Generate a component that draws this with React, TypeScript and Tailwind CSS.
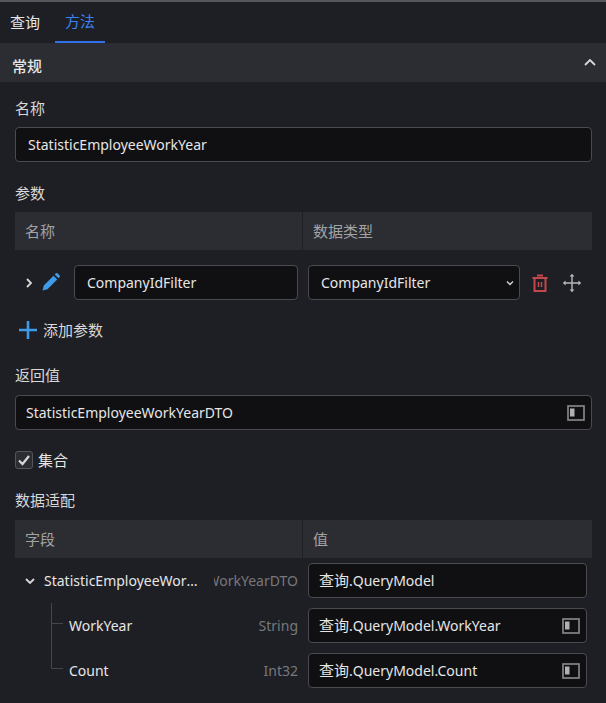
import type { ReactNode } from "react";

const fontStack = "font-['Noto_Sans','Noto_Sans_CJK_SC',sans-serif]";

function PanelIcon() {
  return (
    <svg width="18" height="16" viewBox="0 0 18 16" className="shrink-0">
      <rect x="1" y="1" width="16" height="14" fill="none" stroke="#858585" strokeWidth="1.7" />
      <rect x="3" y="3.5" width="4.5" height="8" fill="#b0b0b0" />
    </svg>
  );
}

function Chevron({ dir, className }: { dir: "up" | "down" | "right"; className?: string }) {
  const d = {
    up: "M2 9 L7 4 L12 9",
    down: "M3 5 L7 9 L11 5",
    right: "M5 3 L9 7 L5 11",
  }[dir];
  return (
    <svg width="14" height="14" viewBox="0 0 14 14" className={className}>
      <path d={d} fill="none" stroke="#d8d8d8" strokeWidth="1.8" />
    </svg>
  );
}

function Field({ value, className, icon }: { value: ReactNode; className?: string; icon?: boolean }) {
  return (
    <div
      className={`flex h-[35px] items-center justify-between rounded-[4px] border border-[#4a4b50] bg-[#101013] text-[14px] text-[#e6e6e6] ${className ?? ""}`}
    >
      <span className="whitespace-nowrap">{value}</span>
      {icon ? <PanelIcon /> : null}
    </div>
  );
}

function Query({ path }: { path: string }) {
  return (
    <>
      <span className="text-[15px]">查询</span>
      {path}
    </>
  );
}

function TableHead({ left, right }: { left: string; right: string }) {
  return (
    <div className="flex h-[38px] items-center bg-[#2b2d33] text-[15px] text-[#a3a3a3]">
      <div className="w-[287px] pl-[10px]">{left}</div>
      <div className="flex h-[38px] items-center border-l border-[#1e1f24] pl-[10px]">{right}</div>
    </div>
  );
}

function AdaptRow({ name, type, path, last }: { name: string; type: string; path: string; last?: boolean }) {
  return (
    <div className="relative flex h-[45px] items-center pl-[54px] pr-[19px]">
      <span className="absolute left-[51px] top-0 h-[21px] w-[12px] border-b border-l border-[#45464b]" />
      {last ? null : <span className="absolute left-[51px] top-[21px] h-[24px] border-l border-[#45464b]" />}
      <span className="pl-[15px] text-[14px] text-[#e6e6e6]">{name}</span>
      <span className="ml-auto mr-[10px] text-[14px] text-[#77787c]">{type}</span>
      <Field value={<Query path={path} />} icon className="w-[279px] pl-[10px] pr-[6px]" />
    </div>
  );
}

export default function App() {
  return (
    <div className={`h-[703px] w-[606px] overflow-hidden border-t-2 border-[#55565a] bg-[#1e1f24] ${fontStack}`}>
      <div className="flex h-[41px] items-stretch text-[15px]">
        <div className="flex w-[55px] items-center pl-[10px] text-[#e6e6e6]">查询</div>
        <div className="flex w-[50px] items-center justify-center border-b-2 border-[#2f6fe8] text-[#3b82f0]">方法</div>
      </div>

      <div className="flex h-[39px] items-center justify-between bg-[#2b2d33] pl-[12px] pr-[9px] text-[15px] font-medium text-[#e6e6e6]">
        <span className="pt-[7px]">常规</span>
        <Chevron dir="up" />
      </div>

      <div className="px-[15px] pr-[14px]">
        <div className="flex h-[45px] items-end pb-[9px] text-[15px] leading-5 text-[#d8d8d8]">名称</div>
        <Field value="StatisticEmployeeWorkYear" className="pl-[12px]" />

        <div className="flex h-[50px] items-end pb-[9px] text-[15px] leading-5 text-[#d8d8d8]">参数</div>
        <TableHead left="名称" right="数据类型" />

        <div className="flex h-[50px] items-end">
          <Chevron dir="right" className="mb-[10px] ml-[7px]" />
          <svg width="20" height="20" viewBox="0 0 20 20" className="mb-[8px] ml-[5px]">
            <path d="M1.5 18.5 L2.8 13.5 L12.5 3.8 L16.2 7.5 L6.5 17.2 Z M13.7 2.6 L15 1.3 Q15.8 .7 16.6 1.3 L18.7 3.4 Q19.3 4.2 18.7 5 L17.4 6.3 Z" fill="#3d9be9" />
          </svg>
          <Field value="CompanyIdFilter" className="ml-[13px] w-[224px] pl-[12px]" />
          <div className="ml-[10px] flex h-[35px] w-[212px] items-center justify-between rounded-[4px] border border-[#4a4b50] bg-[#101013] pl-[12px] pr-[2px] text-[14px] text-[#e6e6e6]">
            <span>CompanyIdFilter</span>
            <Chevron dir="down" className="scale-75" />
          </div>
          <svg width="18" height="20" viewBox="0 0 18 20" className="mb-[7px] ml-[11px]">
            <path d="M6 2.5 H12 M1.5 5 H16.5 M3.5 5 V18 H14.5 V5" fill="none" stroke="#c4474b" strokeWidth="2" />
            <path d="M7.5 9 V14 M10.5 9 V14" fill="none" stroke="#c4474b" strokeWidth="1.5" />
          </svg>
          <svg width="20" height="20" viewBox="0 0 20 20" className="mb-[7px] ml-[13px]">
            <path d="M10 2 V18 M2 10 H18" fill="none" stroke="#b8b8b8" strokeWidth="1.4" />
            <path d="M10 .8 L12.4 3.6 H7.6 Z M10 19.2 L12.4 16.4 H7.6 Z M.8 10 L3.6 7.6 V12.4 Z M19.2 10 L16.4 7.6 V12.4 Z" fill="#b8b8b8" />
          </svg>
        </div>

        <div className="flex h-[44px] items-center pt-[16px] text-[15px] text-[#d8d8d8]">
          <svg width="20" height="20" viewBox="0 0 20 20" className="ml-[3px]">
            <path d="M10 1 V19 M1 10 H19" fill="none" stroke="#3d9be9" strokeWidth="2.6" />
          </svg>
          <span className="ml-[5px]">添加参数</span>
        </div>

        <div className="flex h-[51px] items-end pb-[10px] text-[15px] leading-5 text-[#d8d8d8]">返回值</div>
        <Field value="StatisticEmployeeWorkYearDTO" icon className="pl-[10px] pr-[6px]" />

        <div className="mt-[21px] flex h-[18px] items-center text-[15px] text-[#e6e6e6]">
          <span className="flex h-[18px] w-[18px] items-center justify-center rounded-[3px] border border-[#55565a] bg-[#2b2d33]">
            <svg width="14" height="14" viewBox="0 0 14 14">
              <path d="M2 7.5 L5.5 11 L12 3" fill="none" stroke="#d8d8d8" strokeWidth="2.2" />
            </svg>
          </span>
          <span className="ml-[5px]">集合</span>
        </div>

        <div className="flex h-[51px] items-end pb-[10px] text-[15px] leading-5 text-[#d8d8d8]">数据适配</div>
        <TableHead left="字段" right="值" />
      </div>

      <div className="flex h-[45px] items-center pl-[23px] pr-[19px]">
        <Chevron dir="down" />
        <span className="ml-[7px] w-[160px] truncate text-[14px] text-[#e6e6e6]">StatisticEmployeeWorkYear</span>
        <span className="ml-auto mr-[10px] w-[84px] overflow-hidden whitespace-nowrap text-right text-[14px] text-[#77787c] [direction:rtl]">
          WorkYearDTO
        </span>
        <Field value={<Query path=".QueryModel" />} className="w-[279px] shrink-0 pl-[10px]" />
      </div>
      <AdaptRow name="WorkYear" type="String" path=".QueryModel.WorkYear" />
      <AdaptRow name="Count" type="Int32" path=".QueryModel.Count" last />
    </div>
  );
}
